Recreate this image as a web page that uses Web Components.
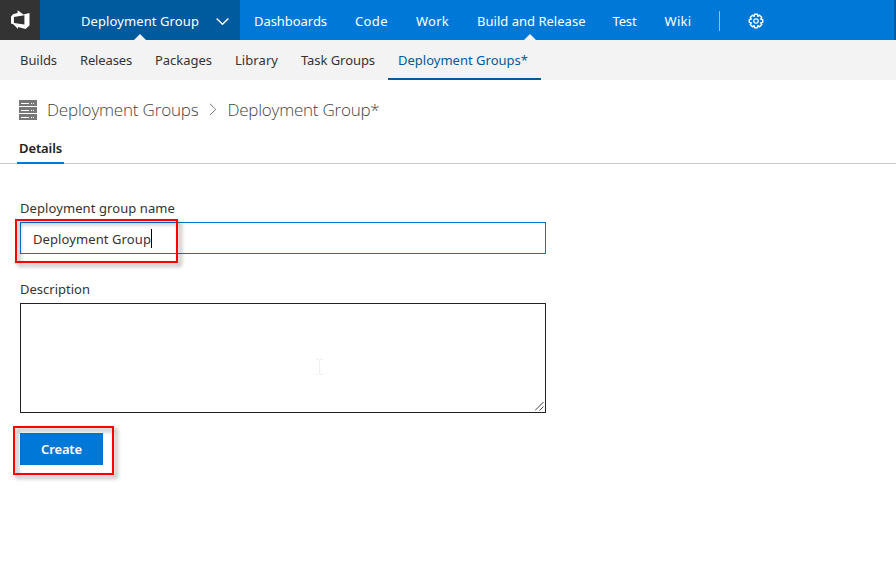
<!DOCTYPE html>
<html lang="en"><head><meta charset="utf-8"><title>Deployment Group</title>
<style>
html,body{margin:0;background:#fff}
body{width:896px;height:570px;overflow:hidden;font:13px/20px "Noto Sans","Open Sans",sans-serif;color:#333}
</style></head><body>
<deploy-page></deploy-page>
<script>
const define=(name,html,after)=>customElements.define(name,class extends HTMLElement{
  constructor(){super();this.attachShadow({mode:'open'}).innerHTML=html}
  connectedCallback(){if(after)after(this)}
});
// A single-line label whose tracking is adjusted to fill the given width.
define('fit-text','<style>:host{display:block;white-space:nowrap;flex:none}span{display:inline-block}</style><span><slot></slot></span>',el=>{
  const w=+el.getAttribute('w'),s=el.shadowRoot.querySelector('span');
  el.style.width=w+'px';
  s.style.letterSpacing=(w-s.getBoundingClientRect().width)/el.textContent.length+'px';
});
define('nav-notch','<style>:host{position:absolute;left:var(--notch-x,50%);bottom:0;margin-left:-6px;width:12px;height:6px;background:#f3f3f3;clip-path:polygon(50% 0,100% 100%,0 100%)}</style>');
define('top-nav',`<style>
:host{display:flex;height:40px;background:#0078d7;color:#fff;line-height:20px}
.logo{width:40px;background:#333}
.project{position:relative;box-sizing:border-box;width:200px;background:#005a9e;display:flex;padding:11px 0 0 41px;--notch-x:100px}
.project svg{margin:6px 0 0 17px}
nav{display:flex;gap:28px;padding:11px 0 0 14px}
.item{position:relative;height:29px}
.item.wide{margin-right:-1px}
.sep{width:1px;height:20px;background:#8dc2ee;margin:11px 28.5px 0 27px}
.gear{margin-top:13px}
.edge{width:2px;background:#005a9e;margin-left:auto}
</style>
<div class="logo"><svg width="40" height="40"><path fill="#fff" fill-rule="evenodd" d="M11 16.4L13 14.2L17.6 13V10.3L23.4 14.5L29.5 13V25.6L25.6 29L18 27V29L13.6 24.6L11 23.6ZM13.9 17V23L24.4 24.6V15.2Z"/></svg></div>
<div class="project"><fit-text w="118">Deployment Group</fit-text><svg width="13" height="9"><path d="M.6 1.5L6.5 7.3L12.4 1.5" fill="none" stroke="#fff" stroke-width="1.4"/></svg><nav-notch></nav-notch></div>
<nav><div class="item"><fit-text w="73">Dashboards</fit-text></div><div class="item"><fit-text w="33">Code</fit-text></div><div class="item"><fit-text w="33">Work</fit-text></div><div class="item wide" style="--notch-x:53px"><fit-text w="108.5">Build and Release</fit-text><nav-notch></nav-notch></div><div class="item"><fit-text w="24">Test</fit-text></div><div class="item"><fit-text w="27">Wiki</fit-text></div></nav>
<div class="sep"></div>
<svg class="gear" width="16" height="16" viewBox="-8 -8 16 16" fill="none" stroke="#fff"><path stroke-width="1.4" stroke-linejoin="round" d="M-1.4-6.7H1.4L1.9-4.7L3.6-5.8L5.8-3.6L4.7-1.9L6.7-1.4V1.4L4.7 1.9L5.8 3.6L3.6 5.8L1.9 4.7L1.4 6.7H-1.4L-1.9 4.7L-3.6 5.8L-5.8 3.6L-4.7 1.9L-6.7 1.4V-1.4L-4.7-1.9L-5.8-3.6L-3.6-5.8L-1.9-4.7Z"/><circle r="2.2" stroke-width="1.2"/></svg>
<div class="edge"></div>`);
define('hub-tabs',`<style>
:host{display:flex;box-sizing:border-box;height:40px;padding:0 20px;gap:23px;background:#f3f3f3;line-height:20px}
fit-text{padding-top:10px}
.active{box-sizing:border-box;height:40px;margin-left:-10px;padding:0 13px 0 10px;color:#005a9e;border-bottom:2px solid #005a9e}
</style><fit-text w="37">Builds</fit-text><fit-text w="52">Releases</fit-text><fit-text w="57">Packages</fit-text><fit-text w="43">Library</fit-text><fit-text w="74">Task Groups</fit-text><div class="active"><fit-text w="130">Deployment Groups*</fit-text></div>`);
define('bread-crumb',`<style>
:host{display:flex;height:58px;box-sizing:border-box;padding:18px 0 0 19px;font:300 17px/24px "Open Sans","Noto Sans",sans-serif;color:#444}
.rack{margin:2px 10px 0 0}.chev{margin:5px 11px 0 10px}
</style>
<svg class="rack" width="18" height="20" shape-rendering="crispEdges"><g fill="#777"><path d="M0 0h18v6H0zM0 7h18v6H0zM0 14h18v6H0z"/></g><path fill="#fff" d="M2 3h8v1H2zM12 3h1v1h-1zM14 3h1v1h-1zM2 10h8v1H2zM12 10h1v1h-1zM14 10h1v1h-1zM2 17h8v1H2zM12 17h1v1h-1zM14 17h1v1h-1z"/></svg>
<fit-text w="151.5">Deployment Groups</fit-text>
<svg class="chev" width="8" height="13"><path d="M1 .8L6.7 6.4L1 12" fill="none" stroke="#777"/></svg>
<fit-text w="152">Deployment Group*</fit-text>`);
define('detail-tabs',`<style>
:host{display:block;height:26px;box-sizing:border-box;border-bottom:1px solid #c8c8c8;padding-left:17px}
div{box-sizing:border-box;width:47px;height:26px;padding-left:2px;border-bottom:2px solid #0078d7;color:#222;font-weight:600}
</style><div><fit-text w="43">Details</fit-text></div>`);
define('callout-frame','<style>:host{position:absolute;box-sizing:border-box;border:2px solid #f00;filter:drop-shadow(3px 3px 2px rgba(0,0,0,.42));pointer-events:none}</style>');
define('group-form',`<style>
:host{display:block;padding:34px 20px 0}
.field{position:relative;box-sizing:border-box;width:526px;height:32px;border:1px solid #0078d7;margin-top:4px;padding:6px 0 0 12px;display:flex}
.caret{width:1px;height:19px;background:#000}
.desc{margin-top:25px}
.area{position:relative;box-sizing:border-box;width:526px;height:110px;border:1px solid #222;margin-top:4px}
.grip{position:absolute;right:1px;bottom:1px}
.beam{position:absolute;left:295px;top:55px}
.action{position:relative;width:83px;margin-top:20px}
button{display:flex;box-sizing:border-box;width:83px;height:32px;border:0;background:#0078d7;color:#fff;padding:6px 0 0 21px;font:600 13px/20px "Noto Sans","Open Sans",sans-serif}
.a{left:-6px;top:-4px;width:163px;height:44px}.b{left:-7px;top:-7px;width:101px;height:49px}
</style>
<fit-text w="155">Deployment group name</fit-text>
<div class="field"><fit-text w="118">Deployment Group</fit-text><div class="caret"></div><callout-frame class="a"></callout-frame></div>
<fit-text class="desc" w="70">Description</fit-text>
<div class="area"><svg class="beam" width="8" height="16" shape-rendering="crispEdges"><path d="M0 .5h3m1 0h3M3.5 1v14M0 15.5h3m1 0h3" stroke="#efefef"/></svg><svg class="grip" width="9" height="9"><path d="M0 8.5L8.5 0M4.5 8.5L8.5 4.5" stroke="#444"/></svg></div>
<div class="action"><button type="button"><fit-text w="41">Create</fit-text></button><callout-frame class="b"></callout-frame></div>`);
define('deploy-page','<style>:host{display:block;width:896px;height:570px}</style><top-nav></top-nav><hub-tabs></hub-tabs><bread-crumb></bread-crumb><detail-tabs></detail-tabs><group-form></group-form>');
</script></body></html>
